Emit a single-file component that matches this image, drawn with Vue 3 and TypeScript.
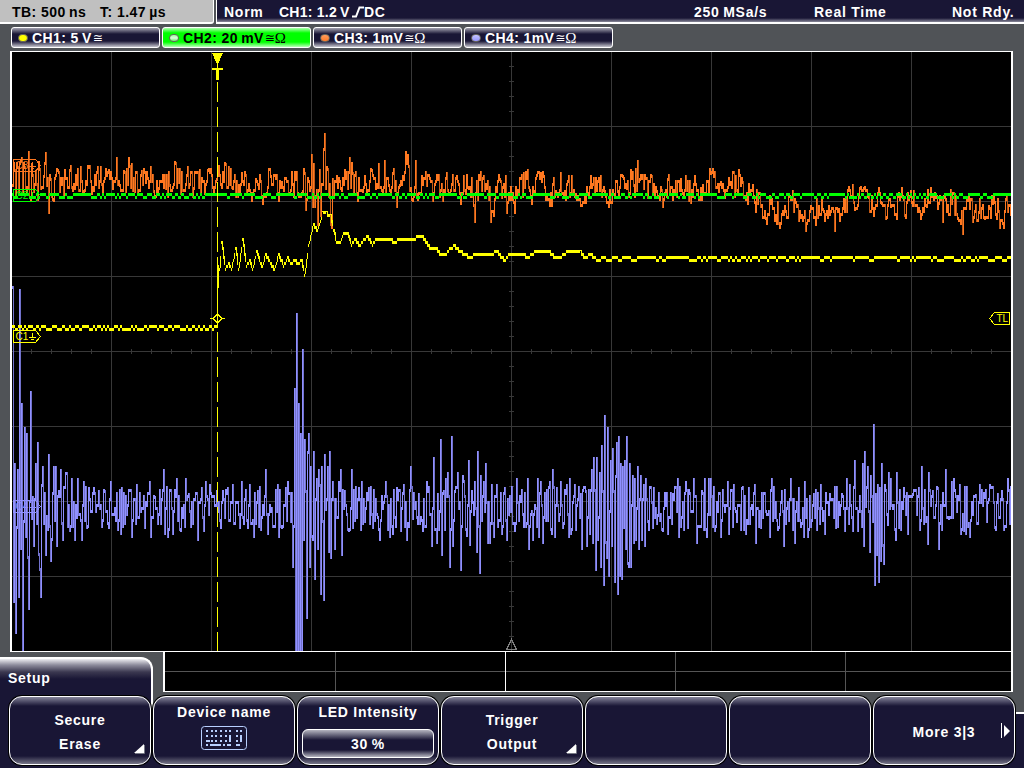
<template>
  <div class="scope">
    <header class="status">
      <div class="status__time">
        <span class="tb">TB: 500&#8201;ns</span>
        <span>T: 1.47&#8201;µs</span>
      </div>
      <div class="status__main">
        <span class="mode">Norm</span>
        <span class="trigger">CH1: 1.2&#8201;V</span>
        <svg class="edge" width="12" height="12" viewBox="0 0 12 12">
          <path d="M0 10.5H4L7.5 1.5H12" />
        </svg>
        <span class="coupling">DC</span>
        <span class="rate">250&#8201;MSa/s</span>
        <span class="acq">Real Time</span>
        <span class="ready">Not Rdy.</span>
      </div>
    </header>

    <div class="channels">
      <div
        v-for="ch in channels"
        :key="ch.name"
        class="channel"
        :class="[ch.tone, { active: ch.active }]"
      >
        <i class="led" />
        <span class="channel__name">{{ ch.name }}: {{ ch.scale }}</span>
        <span class="approx">≅</span>
        <span v-if="ch.ohm" class="ohm">Ω</span>
      </div>
    </div>

    <div class="display">
      <svg class="plot" width="1003" height="601" viewBox="10 51 1003 601" shape-rendering="crispEdges">
        <rect x="12" y="52" width="999" height="599" fill="#000" />
        <path class="grid" :d="grid" />
        <path class="pointer" d="M506.5 649.5H516.5L511.5 639.5Z" />

        <path class="blue" :d="ch4.bright" />
        <path class="blue-dim" :d="ch4.dim" />
        <path class="orange" :d="ch3.bright" />
        <path class="orange-dim" :d="ch3.dim" />
        <path class="green" :d="ch2" />
        <path class="yellow" :d="ch1" />

        <g v-for="m in markers" :key="m.label" :class="m.tone" class="marker">
          <path :d="`M13.5 ${m.y - 6}H35.5L40.5 ${m.y}L35.5 ${m.y + 6}H13.5Z`" />
          <path :d="`M32.5 ${m.y - 4}V${m.y + 1}M29 ${m.y + 1}H36M31 ${m.y + 3}H34`" />
          <text x="15.5" :y="m.y + 3.5">{{ m.label }}</text>
        </g>

        <path class="cursor" d="M217.5 82V651" />
        <path class="yellow-fill" d="M212 53H223L218 64H217Z" />
        <path class="yellow-fill" d="M212 68H223V70H219V80H216V70H212Z" />
        <path class="yellow" d="M217.5 63V69" />
        <path class="yellow" d="M210 318.5H213L217.5 314L222 318.5L217.5 323L213 318.5M222 318.5H225" />

        <g class="marker yellow-mark">
          <path d="M994.5 312.5H1009.5V324.5H994.5L989.5 318.5Z" />
          <text x="996.5" y="322">TL</text>
        </g>
        <path class="frame" d="M10 51.5H1013M10 651.5H1013" />
        <path class="frame wide" d="M11 51V652M1012 51V652" />
      </svg>
    </div>

    <div class="lower">
      <div class="tab">Setup</div>
      <svg class="overview" width="850" height="40" viewBox="163 652 850 40" shape-rendering="crispEdges">
        <rect x="163" y="652" width="850" height="40" fill="#000" />
        <path class="overview-grid" d="M165 671.5H1011M335.5 652V691M675.5 652V691M845.5 652V691" />
        <path class="frame" d="M505.5 652V691M163 691.5H1013" />
        <path class="frame wide" d="M164 652V692M1012 652V692" />
      </svg>
    </div>

    <footer class="softkeys">
      <div v-for="(key, i) in softkeys" :key="i" class="key" :class="key.kind">
        <span v-for="line in key.lines" :key="line">{{ line }}</span>
        <svg v-if="key.kind === 'keyboard'" class="kbd" width="46" height="24" viewBox="0 0 46 24">
          <rect x=".5" y=".5" width="45" height="23" rx="3" fill="none" stroke="#b9d0ff" />
          <path :d="keyDots" fill="#b9d0ff" shape-rendering="crispEdges" />
        </svg>
        <div v-if="key.value" class="value">{{ key.value }}</div>
        <svg v-if="key.kind === 'submenu'" class="corner" width="11" height="10" viewBox="0 0 11 10">
          <path d="M10 0V9H0Z" fill="#fff" />
          <path d="M10.5 1V9.5H1" fill="none" stroke="#777985" />
        </svg>
        <svg v-if="key.kind === 'more'" class="next" width="9" height="16" viewBox="0 0 9 16">
          <path d="M0 0H1V15H0ZM3 2L9 8L3 14Z" fill="#fff" />
        </svg>
      </div>
    </footer>
  </div>
</template>

<script setup lang="ts">
interface Channel {
  name: string
  scale: string
  tone: string
  ohm: boolean
  active?: boolean
}

interface Softkey {
  lines: string[]
  kind?: 'submenu' | 'keyboard' | 'edit' | 'more'
  value?: string
}

type Point = [number, number]

const channels: Channel[] = [
  { name: 'CH1', scale: '5\u2009V', tone: 'c1', ohm: false },
  { name: 'CH2', scale: '20\u2009mV', tone: 'c2', ohm: true, active: true },
  { name: 'CH3', scale: '1mV', tone: 'c3', ohm: true },
  { name: 'CH4', scale: '1mV', tone: 'c4', ohm: true },
]

const softkeys: Softkey[] = [
  { lines: ['Secure', 'Erase'], kind: 'submenu' },
  { lines: ['Device name'], kind: 'keyboard' },
  { lines: ['LED Intensity'], kind: 'edit', value: '30\u2009%' },
  { lines: ['Trigger', 'Output'], kind: 'submenu' },
  { lines: [] },
  { lines: [] },
  { lines: ['More 3|3'], kind: 'more' },
]

const markers = [
  { label: 'C3', y: 165.5, tone: 'orange-mark' },
  { label: 'C2', y: 195.5, tone: 'green-mark' },
  { label: 'C1', y: 336.5, tone: 'yellow-mark' },
  { label: 'C4', y: 506.5, tone: 'blue-mark' },
]

function makeGrid(): string {
  let d = ''
  for (let x = 111; x < 1011; x += 100) d += `M${x}.5 52V651`
  for (let y = 126; y < 651; y += 75) d += `M12 ${y}.5H1011`
  for (let x = 31; x < 1011; x += 20) d += `M${x}.5 349V354`
  for (let y = 66; y < 651; y += 15) d += `M509 ${y}.5H514`
  return d
}

function makeKeyDots(): string {
  let d = ''
  for (let row = 0; row < 3; row++) {
    for (let col = 0; col < 5; col++) {
      const w = row === 2 && col < 1 ? 4 : 2
      d += `M${5 + Math.round(col * 4.7)} ${4 + row * 5}h${w}v2h-${w}z`
    }
  }
  d += 'M28 4h2v2h-2zM28 9h2v7h-2zM35 4h2v2h-2zM39 4h2v2h-2zM35 9h2v2h-2zM39 9h2v7h-2zM35 14h2v2h-2z'
  d += 'M5 18h2v2h-2zM9 18h11v2h-11zM22 18h2v2h-2zM26 18h4v2h-4zM35 18h4v2h-4z'
  return d
}

// small LCG so the noise is the same on every draw
function rng(seed: number) {
  let s = seed
  return () => {
    s = (s * 1664525 + 1013904223) >>> 0
    return s / 4294967296
  }
}

function parse(src: string): Point[] {
  return src.trim().split(/\s+/).map((p) => p.split(':').map(Number) as Point)
}

// one vertical column per pixel, falling edges go to the dim path
function columns(points: Point[], fill: (x: number, a: Point, b: Point) => number) {
  const ys: number[] = []
  for (let i = 0; i < points.length - 1; i++) {
    const a = points[i]
    const b = points[i + 1]
    ys[a[0]] = a[1]
    for (let x = a[0] + 1; x < b[0]; x++) ys[x] = fill(x, a, b)
  }
  const last = points[points.length - 1]
  ys[last[0]] = last[1]
  let bright = ''
  let dim = ''
  for (let x = 12; x <= 1010; x++) {
    const prev = ys[x - 1] ?? ys[x]
    const top = Math.min(prev, ys[x])
    const bottom = Math.max(prev, ys[x]) + 3
    const seg = `M${x}.5 ${top}V${bottom}`
    if (bottom - top > 15 && ys[x] > prev) dim += seg
    else bright += seg
  }
  return { bright, dim }
}

const bluePeaks = parse(`
12:286 13:600 14:463 15:631 16:526 17:469 18:595 19:289 20:547 21:403 22:648 23:520 24:427 25:535
26:433 27:556 28:607 29:500 30:391 31:517 32:496 33:544 35:463 37:442 38:553 39:568 40:595 41:484 42:466
45:553 46:515 48:454 49:525 50:559 51:538 53:466 55:466 56:544 58:490 60:469 62:538 65:472 66:472
69:529 71:478 74:538 77:478 81:538 83:481 86:526 88:487 93:487 98:490 104:490 108:526 110:481
120:532 121:487 131:535 136:484 144:526 149:481 150:535 154:496 163:469 164:532 167:535 172:532 176:478
180:529 185:478 188:493 197:538 201:487 203:529 205:481 209:484 216:490 220:526 222:490 227:487 232:484
239:526 241:481 247:526 249:484 253:535 257:490 265:469 267:532 277:484 278:535 281:526 285:487 287:481
290:520 292:565 294:388 295:648 296:313 297:648 298:403 299:648 300:433 301:648 302:349 303:538
304:439 305:490 306:616 307:451 308:433 309:565 310:466 311:535 312:538 313:451 314:577 316:478 317:547
318:469 319:484 320:592 321:466 322:520 323:598 324:454 325:508 327:466 328:550 329:451 330:556 332:481
334:547 338:481 340:469 341:553 344:490 348:529 351:469 352:526 358:487 361:481 364:520 368:487 372:526
379:538 385:481 389:535 392:532 396:487 400:529 403:484 406:538 410:466 412:517 418:493 422:529 426:481
427:490 431:544 433:457 436:541 437:493 440:439 441:553 443:490 445:478 447:472 449:565 451:436 452:544
454:490 457:472 460:568 462:475 463:480 466:534 468:460 469:543 471:490 474:481 476:550 477:451 479:571
480:475 483:481 485:463 487:541 489:541 491:484 493:535 496:484 501:532 504:487 506:538 514:529 516:478
520:500 527:478 528:547 532:538 537:478 538:535 540:481 542:541 549:481 551:532 552:469 554:535
556:487 560:481 562:526 566:484 568:535 569:478 570:532 574:484 580:493 581:547 585:490 586:544
589:532 591:469 592:541 593:457 595:568 596:457 597:538 599:472 600:565 601:445 602:490 603:583
604:415 605:541 606:556 607:427 608:574 610:460 611:544 612:448 613:490 614:580 615:475 616:442 617:592
618:436 619:574 620:463 621:577 622:466 623:526 624:460 625:547 626:436 627:562 628:565 629:463 630:565
632:475 633:541 634:478 635:538 637:466 638:547 640:475 641:538 643:484 644:544 645:478 647:520
652:526 653:487 657:514 662:529 667:532 672:493 677:478 678:535 685:481 687:526 693:478 696:541 701:490
704:478 706:535 708:478 710:478 714:529 720:535 727:481 728:532 733:484 736:520 741:487 745:532
748:487 754:484 755:541 760:526 769:535 771:478 778:526 781:490 783:544 790:478 794:541 798:487 803:535
804:481 807:535 813:493 820:484 824:532 829:493 835:526 841:493 844:529 846:478 849:484 852:529
854:460 857:529 862:463 863:544 864:451 865:505 867:466 869:550 870:475 872:520 873:424 874:583 875:493
876:553 877:484 878:580 879:487 880:559 881:463 882:544 883:562 884:484 887:523 888:472 890:478
895:538 896:472 898:526 903:487 907:532 912:493 918:487 921:466 925:520 927:542 928:472 932:490 937:487
938:547 945:469 948:517 951:481 953:478 959:484 960:532 963:529 965:532 969:535 975:494 979:484
984:496 986:520 989:484 994:526 997:493 1001:490 1007:478 1011:487
`)

const orangePeaks = parse(`
12:184 14:169 15:196 17:166 18:193 21:157 22:190 24:166 26:193 28:151 29:196 31:163 33:190 35:170 37:198
38:161 40:187 43:175 45:152 46:184 48:211 50:178 53:199 57:169 59:190 63:193 64:169 69:169 74:187
80:166 83:190 88:166 91:192 97:166 100:166 102:190 108:169 112:187 116:157 119:184 123:170 125:190
128:157 131:163 134:190 141:170 145:181 150:166 153:190 158:187 165:187 169:184 174:161 178:181
187:166 193:187 199:169 200:193 207:169 213:190 216:178 225:163 228:166 232:187 238:184 241:172 246:190
251:199 255:178 258:187 262:202 270:175 278:199 281:181 288:193 295:178 302:190 304:172 305:208 311:154
312:205 313:163 314:205 317:223 319:169 320:214 323:148 324:133 325:187 326:166 330:223 331:226 332:178
333:193 336:175 340:187 344:169 347:187 349:157 352:172 357:199 362:190 364:175 366:190 371:169
375:187 378:163 382:193 384:160 385:193 388:184 392:172 396:205 399:184 402:175 403:178 405:151 407:154
410:187 412:199 415:160 416:193 421:175 426:184 432:199 437:178 442:199 446:172 449:193 456:175
460:202 463:175 468:187 472:195 474:220 479:178 483:175 486:187 490:220 493:214 496:190 499:178 501:196
505:175 506:211 508:192 514:211 518:190 523:172 527:169 531:202 534:190 540:172 543:175 546:193 549:204
555:190 560:172 564:190 568:175 571:175 575:193 578:198 585:201 590:175 594:190 600:175 604:190 608:205
613:193 617:190 622:175 626:187 630:169 633:184 637:160 639:178 643:187 647:196 651:175 656:190 662:205
667:178 674:192 680:178 685:175 688:199 694:175 700:187 702:184 710:172 713:175 718:190 720:181 724:196
730:181 735:175 738:169 740:184 742:181 747:202 752:184 757:202 760:205 765:217 770:202 775:214
779:226 784:205 792:190 796:205 801:214 805:229 810:205 815:223 818:205 822:208 828:205 834:229 838:208
845:196 852:184 854:208 859:187 863:187 868:196 873:214 878:187 881:202 885:217 890:205 896:217 901:187
904:214 910:190 913:190 920:217 926:205 930:187 935:196 938:202 942:220 944:196 951:202 957:217 962:232
967:199 972:220 978:211 984:217 988:205 992:202 996:217 999:226 1003:226 1006:196 1011:214
`)

const yellowPoints = parse(`
219:268 221:241 225:268 228:262 231:268 235:247 238:268 242:238 246:265 249:259 252:268 256:250
260:262 262:265 265:253 270:262 274:268 278:253 283:265 287:256 290:262 294:259 298:262 301:259 304:274
308:244 313:223 317:229 319:223 322:212 326:212 330:215 333:229 336:241 340:241 343:232 347:232
351:244 354:238 359:244 363:238 367:235 372:244 375:238 390:238 394:241 398:238 412:238 418:235
421:235 430:247 436:247 440:253 445:253 450:247 454:244 456:247 463:253 470:256 475:253 490:253
496:250 504:259 509:253 522:253 528:256 535:250 548:250 554:256 560:256 567:250 580:251 584:256
590:253 593:256
`)

function makeBlue() {
  const rand = rng(71)
  let side = 1
  let y = 507
  return columns(bluePeaks, () => {
    if (rand() < 0.85) {
      side = rand() < 0.72 ? -side : side
      y = 507 + side * Math.round(rand() * 7.5) * 3
    }
    return y
  })
}

function makeOrange() {
  const rand = rng(19)
  let off = 0
  return columns(orangePeaks, (x, a, b) => {
    const mid = a[1] + ((b[1] - a[1]) * (x - a[0])) / (b[0] - a[0])
    const base = x < 400 ? 181 : x < 750 ? 186 : x < 850 ? 205 : 202
    const amp = x < 45 ? 13 : 9
    if (rand() < 0.8) off = Math.round((rand() - 0.5) * amp) * 3
    return Math.round((mid * 0.4 + base * 0.6 + off) / 3) * 3
  })
}

// flat line that toggles between two neighbouring ADC codes
function toggling(from: number, to: number, y: number, seed: number, high: number, low = 5): string {
  const rand = rng(seed)
  let d = ''
  let x = from
  let down = false
  while (x < to) {
    const end = Math.min(to, x + 1 + Math.ceil(rand() * rand() * (down ? low : high) * 1.8))
    const top = down ? y + 3 : y
    for (; x < end; x++) d += `M${x}.5 ${top}v3`
    down = !down
  }
  return d
}

function makeYellow(): string {
  let d = toggling(12, 217, 325, 5, 6) + 'M217.5 272V328M218.5 265V288'
  for (let i = 0; i < yellowPoints.length - 1; i++) {
    const [ax, ay] = yellowPoints[i]
    const [bx, by] = yellowPoints[i + 1]
    let prev = ay
    for (let x = ax; x < bx; x++) {
      const raw = ay + ((by - ay) * (x - ax)) / (bx - ax)
      const y = 253 + Math.round((raw - 253) / 3) * 3
      const top = Math.min(prev, y)
      d += `M${x}.5 ${top}V${Math.max(prev, y) + (top === y && prev !== y ? 0 : 3)}`
      prev = y
    }
  }
  return d + toggling(593, 1011, 256, 33, 16)
}

const grid = makeGrid()
const keyDots = makeKeyDots()
const ch1 = makeYellow()
const ch2 = toggling(12, 1011, 193, 8, 12, 4)
const ch3 = makeOrange()
const ch4 = makeBlue()
</script>

<style>
body {
  margin: 0;
  background: #505357;
}
</style>

<style scoped>
.scope {
  width: 1024px;
  height: 768px;
  overflow: hidden;
  display: flex;
  flex-direction: column;
  background: #505357;
  color: #fff;
  font: bold 14px/16px 'Liberation Sans', Arial, sans-serif;
  letter-spacing: 0.75px;
  white-space: nowrap;
}

.scope svg {
  display: block;
}

.status {
  display: flex;
  height: 24px;
  gap: 2px;
}

.status__time,
.status__main {
  box-sizing: border-box;
  display: flex;
  padding-top: 4px;
}

.status__time {
  width: 214px;
  padding-left: 12px;
  background: #c0c0c0;
  color: #000;
  letter-spacing: 0.45px;
  border-right: 1px solid #fff;
  border-bottom: 2px solid #fff;
  border-radius: 0 0 3px 0;
}

.tb {
  width: 88px;
}

.status__main {
  width: 808px;
  padding-left: 7px;
  background: linear-gradient(#191635 18px, #8a899a 22px, #fff 22px);
  border-left: 1px solid #fff;
}

.mode {
  width: 55px;
}

.trigger {
  width: 73px;
  letter-spacing: 0.25px;
}

.edge {
  margin-top: 2px;
}

.edge path {
  fill: none;
  stroke: #fff;
  stroke-width: 2;
}

.coupling {
  width: 330px;
}

.rate {
  width: 120px;
}

.acq {
  width: 138px;
}

.channels {
  display: flex;
  gap: 2px;
  padding: 3px 0 3px 11px;
  height: 21px;
}

.channel {
  box-sizing: border-box;
  width: 149px;
  height: 21px;
  padding-left: 6px;
  display: flex;
  align-items: center;
  border: 1px solid #fff;
  border-radius: 3px;
  background: linear-gradient(#a3a2b0, #191635 6px, #191635 13px, #c5c5ce);
}

.channel.active {
  color: #000;
  background: linear-gradient(#b0ffb0, #0f0 5px, #0f0 14px, #b8ffb8);
}

.channel__name {
  letter-spacing: 0.4px;
}

.led {
  width: 8px;
  height: 6px;
  margin-right: 4px;
  border: 1px solid #66645c;
  border-radius: 4px;
  background: #ff0;
}

.c2 .led {
  background: linear-gradient(#9f9, #dfd, #6e6);
}

.c3 .led {
  background: linear-gradient(#ff9c5c, #ff7a28);
}

.c4 .led {
  background: linear-gradient(#c4c4ff, #9494ff);
}

.approx {
  width: 10px;
  margin-left: 1px;
  font: 12px/14px 'DejaVu Sans', sans-serif;
  letter-spacing: 0;
}

.ohm {
  font: 15px/16px 'Liberation Serif', serif;
}

.display {
  height: 601px;
  padding-left: 10px;
}

.grid {
  fill: none;
  stroke: #383838;
}

.pointer {
  fill: none;
  stroke: #808080;
}

.frame {
  fill: none;
  stroke: #fff;
}

.frame.wide {
  stroke-width: 2;
}

.yellow {
  fill: none;
  stroke: #ff0;
}

.yellow-fill {
  fill: #ff0;
}

.green {
  fill: none;
  stroke: #0f0;
}

.orange {
  fill: none;
  stroke: #ff7820;
}

.orange-dim {
  fill: none;
  stroke: #c05a18;
}

.blue {
  fill: none;
  stroke: #9090ff;
}

.blue-dim {
  fill: none;
  stroke: #7272cc;
}

.cursor {
  fill: none;
  stroke: #ff0;
  stroke-dasharray: 20 5;
}

.marker path {
  fill: none;
  stroke: currentColor;
}

.marker text {
  fill: currentColor;
  font: 10px 'Liberation Sans', Arial, sans-serif;
  letter-spacing: 0;
}

.yellow-mark {
  color: #ff0;
}

.green-mark {
  color: #0f0;
}

.orange-mark {
  color: #ff7820;
}

.blue-mark {
  color: #9090ff;
}

.overview-grid {
  fill: none;
  stroke: #555;
}

.lower {
  display: flex;
  justify-content: space-between;
  height: 44px;
  padding-right: 11px;
}

.tab {
  box-sizing: border-box;
  width: 153px;
  height: 60px;
  margin-top: 5px;
  padding: 11px 0 0 8px;
  border-top: 2px solid #fff;
  border-right: 2px solid #fff;
  border-radius: 0 12px 0 0;
  background: linear-gradient(#eeeef2, #8d8c9c 6px, #3b3850 13px, #191635 20px);
}

.softkeys {
  box-sizing: border-box;
  display: flex;
  gap: 2px;
  height: 72px;
  padding: 0 0 0 9px;
  background: linear-gradient(transparent 16px, #fff 16px, #fff 18px, #191635 18px);
}

.softkeys::before {
  content: '';
  width: 9px;
  height: 18px;
  margin: 0 -2px 0 -9px;
  background: #191635;
}

.key {
  box-sizing: border-box;
  position: relative;
  width: 142px;
  height: 69px;
  padding-top: 14px;
  display: flex;
  flex-direction: column;
  align-items: center;
  border: 1px solid #fff;
  border-radius: 13px;
  box-shadow: 0 0 0 1px #000;
  background: linear-gradient(#85849a, #191635 9px, #191635 59px, #777688);
}

.key span {
  line-height: 24px;
}

.key.submenu {
  padding-top: 11px;
}

.key.keyboard,
.key.edit {
  padding-top: 3px;
}

.key.more {
  padding-top: 23px;
}

.kbd {
  margin-top: 2px;
}

.value {
  box-sizing: border-box;
  width: 132px;
  height: 29px;
  margin-top: 5px;
  padding-top: 6px;
  text-align: center;
  border: 1px solid #fff;
  border-radius: 6px;
  background: linear-gradient(#b5b5c0, #191635 10px, #191635 20px, #b5b5c0);
}

.corner {
  position: absolute;
  right: 5px;
  bottom: 10px;
}

.next {
  position: absolute;
  right: 4px;
  top: 26px;
}
</style>
